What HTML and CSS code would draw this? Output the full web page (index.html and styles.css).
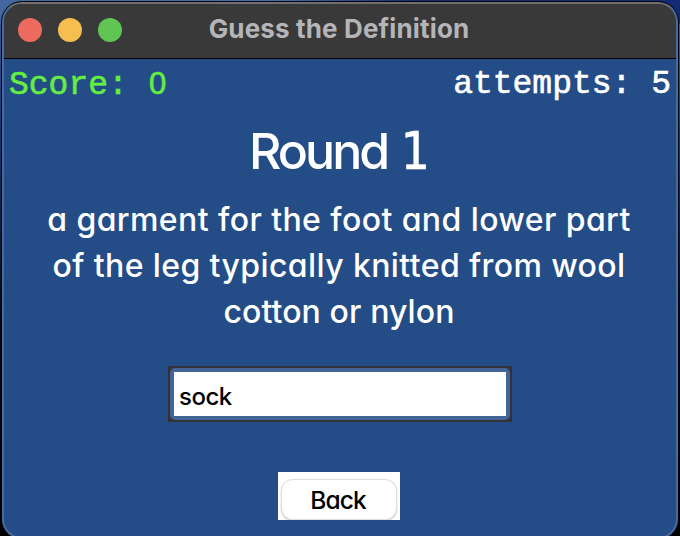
FILE: index.html
```html
<!DOCTYPE html>
<html lang="en">
<head>
<meta charset="utf-8">
<title>Guess the Definition</title>
<link rel="stylesheet" href="styles.css">
</head>
<body>
<main class="window">
  <header class="titlebar">
    <div class="lights"><i class="light close"></i><i class="light minimize"></i><i class="light expand"></i></div>
    <h1 class="title">Guess the Definition</h1>
  </header>
  <div class="status"><span class="score">Score: <span class="zero">0</span></span><span class="attempts">attempts: 5</span></div>
  <h2 class="round">Round <span class="number">1</span></h2>
  <p class="definition">
    <span class="line first">a garment for the foot and lower part</span>
    <span class="line second">of the leg typically knitted from wool</span>
    <span class="line third">cotton or nylon</span>
  </p>
  <div class="field"><div class="ring"><input class="answer" type="text" value="sock" aria-label="Answer"></div></div>
  <div class="button-frame"><button class="back" type="button">Back</button></div>
</main>
</body>
</html>
```
FILE: styles.css
```css
* { box-sizing: border-box; }
body {
  margin: 0;
  height: 536px;
  padding: 2px 2px 0;
  overflow: hidden;
  background: linear-gradient(90deg, #45679f, #4a6da5 40%, #162a72 62%, #142a75) top / 100% 24px no-repeat,
    linear-gradient(#3c5f9b, #1e3d75 20%, #03060d 60%, #000);
  font-family: "Comic Sans MS", Inter, sans-serif;
  font-feature-settings: "cv11" 1;
}
.window {
  display: flex;
  flex-direction: column;
  align-items: center;
  width: 676px;
  height: 537px;
  overflow: hidden;
  border: 2px solid #476b9f;
  border-top-color: #707073;
  border-radius: 20px;
  box-shadow: 0 0 0 1px #05070c;
  background: #244d87;
  color: #fff;
}
.titlebar {
  display: grid;
  grid-template-columns: 150px 1fr 150px;
  align-items: center;
  flex: none;
  width: 100%;
  height: 55px;
  background: #39393a;
  border-bottom: 1px solid #000;
}
.lights { display: flex; gap: 16px; padding: 0 0 2px 14px; }
.light { width: 24px; height: 24px; border-radius: 50%; }
.close { background: #ed6a5e; }
.minimize { background: #f5bf4f; }
.expand { background: #61c554; }
.title {
  margin: 0 0 0 -2px;
  padding-bottom: 6px;
  text-align: center;
  white-space: nowrap;
  font: 700 26px Inter, sans-serif;
  letter-spacing: 0.15px;
  color: #b5b5b7;
}
.status {
  display: flex;
  justify-content: space-between;
  flex: none;
  width: 662px;
  height: 46px;
  padding-top: 5px;
  font: 33px/42px "Courier New", "Liberation Mono", monospace;
  -webkit-text-stroke: 0.6px;
}
.score { padding-top: 1px; color: #65ed42; }
.zero {
  display: inline-block;
  width: 19.8px;
  text-align: center;
  line-height: 1;
  font-family: "Liberation Sans", sans-serif;
  font-size: 31px;
}
.round {
  margin: 15px 4px 0 0;
  height: 62px;
  font-size: 50px;
  font-weight: 500;
  line-height: 62px;
  letter-spacing: -2.9px;
}
.number {
  margin-left: 3px;
  font-family: "DejaVu Sans Condensed", "DejaVu Sans", sans-serif;
  font-stretch: condensed;
  font-size: 51px;
  line-height: 1;
  -webkit-text-stroke: 0.5px;
}
.definition { margin: 14px 2px 0 0; text-align: center; }
.line {
  display: block;
  height: 46px;
  white-space: nowrap;
  font-size: 32px;
  line-height: 48px;
  font-weight: 500;
}
.first { letter-spacing: 0.41px; }
.second { letter-spacing: 0.4px; }
.third { letter-spacing: 0.1px; }
.field {
  width: 344px;
  height: 56px;
  margin-top: 32px;
  padding: 2px;
  background: #333335;
}
.ring { height: 52px; padding: 4px; border-radius: 5px; background: #426496; }
.answer {
  display: block;
  width: 100%;
  height: 44px;
  padding: 4px 6px 0 5px;
  border: 0;
  outline: 0;
  background: #fff;
  color: #000;
  font: 450 24px Inter, sans-serif;
  letter-spacing: -0.5px;
  font-feature-settings: inherit;
}
.button-frame {
  width: 122px;
  height: 48px;
  margin: 50px 2px 0 0;
  padding: 7px 3px 0;
  overflow: hidden;
  background: #fff;
}
.back {
  display: block;
  width: 116px;
  height: 41px;
  padding: 0 2px 0 0;
  border: 1px solid #dedede;
  border-radius: 12px;
  box-shadow: 0 1px 2px #0003;
  background: #fff;
  color: #000;
  font: 450 24.5px Inter, sans-serif;
  letter-spacing: -0.9px;
  font-feature-settings: inherit;
}
```
